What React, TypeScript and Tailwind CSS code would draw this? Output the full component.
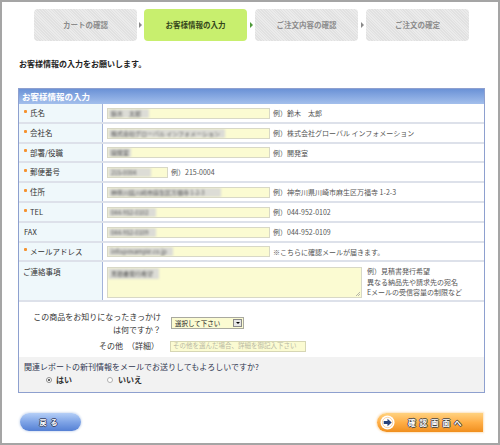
import React from "react";

function Step({ label, active }: { label: string; active?: boolean }) {
  return (
    <div
      className={
        active
          ? "w-[103px] h-[32px] rounded-[4px] flex items-center justify-center text-[7.5px] font-bold bg-[#c8ef6e] text-[#34461a]"
          : "w-[103px] h-[32px] rounded-[4px] flex items-center justify-center text-[7.5px] font-bold bg-[repeating-linear-gradient(45deg,#e1e1e1_0_1px,#ebebeb_1px_2px)] text-[#8c8c8c]"
      }
    >
      {label}
    </div>
  );
}

function Arrow({ green, wide }: { green?: boolean; wide?: boolean }) {
  return (
    <div className={wide ? "w-[8px] flex items-center justify-center" : "w-[7px] flex items-center justify-center"}>
      <div
        className={
          green
            ? "w-0 h-0 border-y-[3px] border-y-transparent border-l-[3px] border-l-[#4f9a3a]"
            : "w-0 h-0 border-y-[3px] border-y-transparent border-l-[3px] border-l-[#8a8a8a]"
        }
      />
    </div>
  );
}

function Row({
  label,
  req,
  h,
  top,
  children,
}: {
  label: string;
  req?: boolean;
  h: string;
  top?: boolean;
  children: React.ReactNode;
}) {
  return (
    <div className={`flex border-b-2 border-[#dde1ea] ${h}`}>
      <div
        className={
          top
            ? "w-[84px] shrink-0 bg-[#eff8fb] border-r border-[#a3b3da] flex items-start pt-[5px] pl-[4px] text-[7.5px] leading-[10px] text-[#333]"
            : "w-[84px] shrink-0 bg-[#eff8fb] border-r border-[#a3b3da] flex items-center pl-[5px] text-[7.5px] leading-[10px] text-[#333]"
        }
      >
        {req && (
          <span className="w-[6px] self-stretch flex items-center">
            <span className="w-[3px] h-[3px] -mt-[4px] bg-[#f5922e] rounded-[1px]" />
          </span>
        )}
        {label}
      </div>
      <div
        className={
          top
            ? "flex-1 flex items-start pt-[5px] pl-[4px] gap-[5px]"
            : "flex-1 flex items-center pl-[4px] gap-[3px]"
        }
      >
        {children}
      </div>
    </div>
  );
}

function Field({ w, blurW, text }: { w: string; blurW: string; text: string }) {
  return (
    <div className={`h-[11px] bg-[#fbfbd2] border border-[#d8d8c6] overflow-hidden flex ${w}`}>
      <span
        className={`h-full bg-[#dcdcd6] pl-[3px] text-[6px] leading-[9px] text-[#555] blur-[0.8px] whitespace-nowrap overflow-hidden ${blurW}`}
      >
        {text}
      </span>
    </div>
  );
}

function Ex({ children }: { children: React.ReactNode }) {
  return <span className="text-[7px] leading-[10px] text-[#555] whitespace-nowrap">{children}</span>;
}

export default function App() {
  return (
    <div className="w-[500px] h-[445px] border-2 border-[#a5a5a5] bg-white font-['Noto_Sans_CJK_JP','Noto_Sans',sans-serif] overflow-hidden">
      {/* Steps */}
      <div className="flex pl-[32px] pt-[7px]">
        <Step label="カートの確認" />
        <Arrow />
        <Step label="お客様情報の入力" active />
        <Arrow green wide />
        <Step label="ご注文内容の確認" />
        <Arrow wide />
        <Step label="ご注文の確定" />
      </div>

      <p className="mt-[17px] pl-[17px] text-[8px] leading-[12px] font-bold text-[#222]">
        お客様情報の入力をお願いします。
      </p>

      {/* Form table */}
      <div className="mt-[18px] ml-[16px] w-[467px] border border-[#8ea0cf]">
        <div className="h-[15px] bg-gradient-to-b from-[#6b92d6] to-[#a3bfec] pl-[3px] flex items-center text-[8.5px] font-bold text-white">
          お客様情報の入力
        </div>

        <Row label="氏名" req h="h-[20px]">
          <Field w="w-[163px]" blurW="w-[41px]" text="鈴木　太郎" />
          <Ex>例）鈴木　太郎</Ex>
        </Row>
        <Row label="会社名" req h="h-[20px]">
          <Field w="w-[163px]" blurW="w-[117px]" text="株式会社グローバル インフォメーション" />
          <Ex>例）株式会社グローバル インフォメーション</Ex>
        </Row>
        <Row label="部署/役職" req h="h-[19px]">
          <Field w="w-[163px]" blurW="w-[23px]" text="開発室" />
          <Ex>例）開発室</Ex>
        </Row>
        <Row label="郵便番号" req h="h-[20px]">
          <Field w="w-[61px]" blurW="w-[43px]" text="215-0004" />
          <Ex>例）215-0004</Ex>
        </Row>
        <Row label="住所" req h="h-[20px]">
          <Field w="w-[163px]" blurW="w-[113px]" text="神奈川県川崎市麻生区万福寺 1-2-3" />
          <Ex>例）神奈川県川崎市麻生区万福寺 1-2-3</Ex>
        </Row>
        <Row label="TEL" req h="h-[20px]">
          <Field w="w-[163px]" blurW="w-[48px]" text="044-952-0102" />
          <Ex>例）044-952-0102</Ex>
        </Row>
        <Row label="FAX" h="h-[20px]">
          <Field w="w-[163px]" blurW="w-[48px]" text="044-952-0109" />
          <Ex>例）044-952-0109</Ex>
        </Row>
        <Row label="メールアドレス" req h="h-[19px]">
          <Field w="w-[163px]" blurW="w-[65px]" text="info@example.co.jp" />
          <Ex>※こちらに確認メールが届きます。</Ex>
        </Row>
        <Row label="ご連絡事項" h="h-[40px]" top>
          <div className="relative w-[255px] h-[31px] bg-[#fbfbd2] border border-[#d8d8c6] overflow-hidden">
            <span className="block w-[51px] h-[11px] bg-[#dcdcd6] pl-[3px] text-[6px] leading-[11px] text-[#555] blur-[0.8px] whitespace-nowrap overflow-hidden">
              見積書発行希望
            </span>
            <svg className="absolute right-[1px] bottom-[1px]" width="5" height="5" viewBox="0 0 5 5">
              <path d="M5 1L1 5M5 3L3 5" stroke="#999" strokeWidth="0.7" />
            </svg>
          </div>
          <div className="flex flex-col text-[7px] leading-[10.5px] text-[#555] -mt-[1px]">
            <span>例）見積書発行希望</span>
            <span>異なる納品先や請求先の宛名</span>
            <span>Eメールの受信容量の制限など</span>
          </div>
        </Row>

        {/* Survey */}
        <div className="flex flex-col gap-[3px] pt-[8px] pb-[4px]">
          <div className="flex items-center h-[26px]">
            <div className="w-[142px] text-right text-[8px] leading-[13px] text-[#333]">
              この商品をお知りになったきっかけ
              <br />
              は何ですか？
            </div>
            <div className="ml-[10px] w-[73px] h-[12px] bg-[#fbfbd2] border border-[#a9a9a0] flex items-center">
              <span className="flex-1 pl-[3px] text-[6.5px] leading-[10px] text-[#222]">選択して下さい</span>
              <span className="w-[9px] h-[8px] mr-[1px] bg-[#e6e6e6] border border-[#8a8a8a] flex items-center justify-center">
                <span className="w-0 h-0 border-x-[2px] border-x-transparent border-t-[2.5px] border-t-black" />
              </span>
            </div>
          </div>
          <div className="flex items-center h-[14px]">
            <div className="w-[142px] text-right text-[8px] leading-[12px] text-[#333] pr-[2px]">
              その他　（詳細）
            </div>
            <div className="ml-[9px] w-[136px] h-[11px] bg-[#fbfbd2] border border-[#d6d6b4] flex items-center pl-[2px] text-[6.5px] text-[#b9b9a4] whitespace-nowrap overflow-hidden">
              その他を選んだ場合、詳細を御記入下さい
            </div>
          </div>
        </div>

        <div className="h-[35px] bg-[#f2f2f2] pt-[4px] pl-[5px]">
          <p className="text-[8px] leading-[12px] text-[#2f3550]">
            関連レポートの新刊情報をメールでお送りしてもよろしいですか?
          </p>
          <div className="flex items-center h-[13px] text-[8px] font-bold text-[#333]">
            <span className="ml-[22px] w-[6px] h-[6px] rounded-full border border-[#8d8d8d] bg-white flex items-center justify-center">
              <span className="w-[2px] h-[2px] rounded-full bg-[#333]" />
            </span>
            <span className="ml-[4px]">はい</span>
            <span className="ml-[35px] w-[6px] h-[6px] rounded-full border border-[#b0b0b0] bg-white" />
            <span className="ml-[5px]">いいえ</span>
          </div>
        </div>
      </div>

      {/* Buttons */}
      <div className="flex justify-between items-start mt-[20px] pl-[18px] pr-[15px]">
        <button className="w-[61px] h-[18px] rounded-full bg-gradient-to-b from-[#b5cff7] via-[#7fa4e6] to-[#5580d4] shadow-[0_0_2px_1px_#d8e2f2] flex items-center justify-center text-[7px] font-bold text-white tracking-[4px] [text-shadow:1px_0_#3a4466,-1px_0_#3a4466,0_1px_#3a4466,0_-1px_#3a4466]">
          戻る
        </button>
        <button className="w-[106px] h-[19px] rounded-l-full rounded-r-[3px] bg-gradient-to-b from-[#ffd27f] via-[#ffae45] to-[#f08f1c] shadow-[0_0_2px_1px_#fde3c0] flex items-center pl-[3px]">
          <svg width="15" height="15" viewBox="0 0 16 16">
            <circle cx="8" cy="8" r="7.5" fill="#fff" />
            <circle cx="8" cy="8" r="5.5" fill="#fff" stroke="#f3a64a" strokeWidth="0.5" />
            <path d="M4 6.5H8V4L12.5 8L8 12V9.5H4Z" fill="#27427c" />
          </svg>
          <span className="ml-[13px] text-[7.5px] font-bold text-white tracking-[4px] [text-shadow:1px_0_#444,-1px_0_#444,0_1px_#444,0_-1px_#444]">
            確認画面へ
          </span>
        </button>
      </div>
    </div>
  );
}
